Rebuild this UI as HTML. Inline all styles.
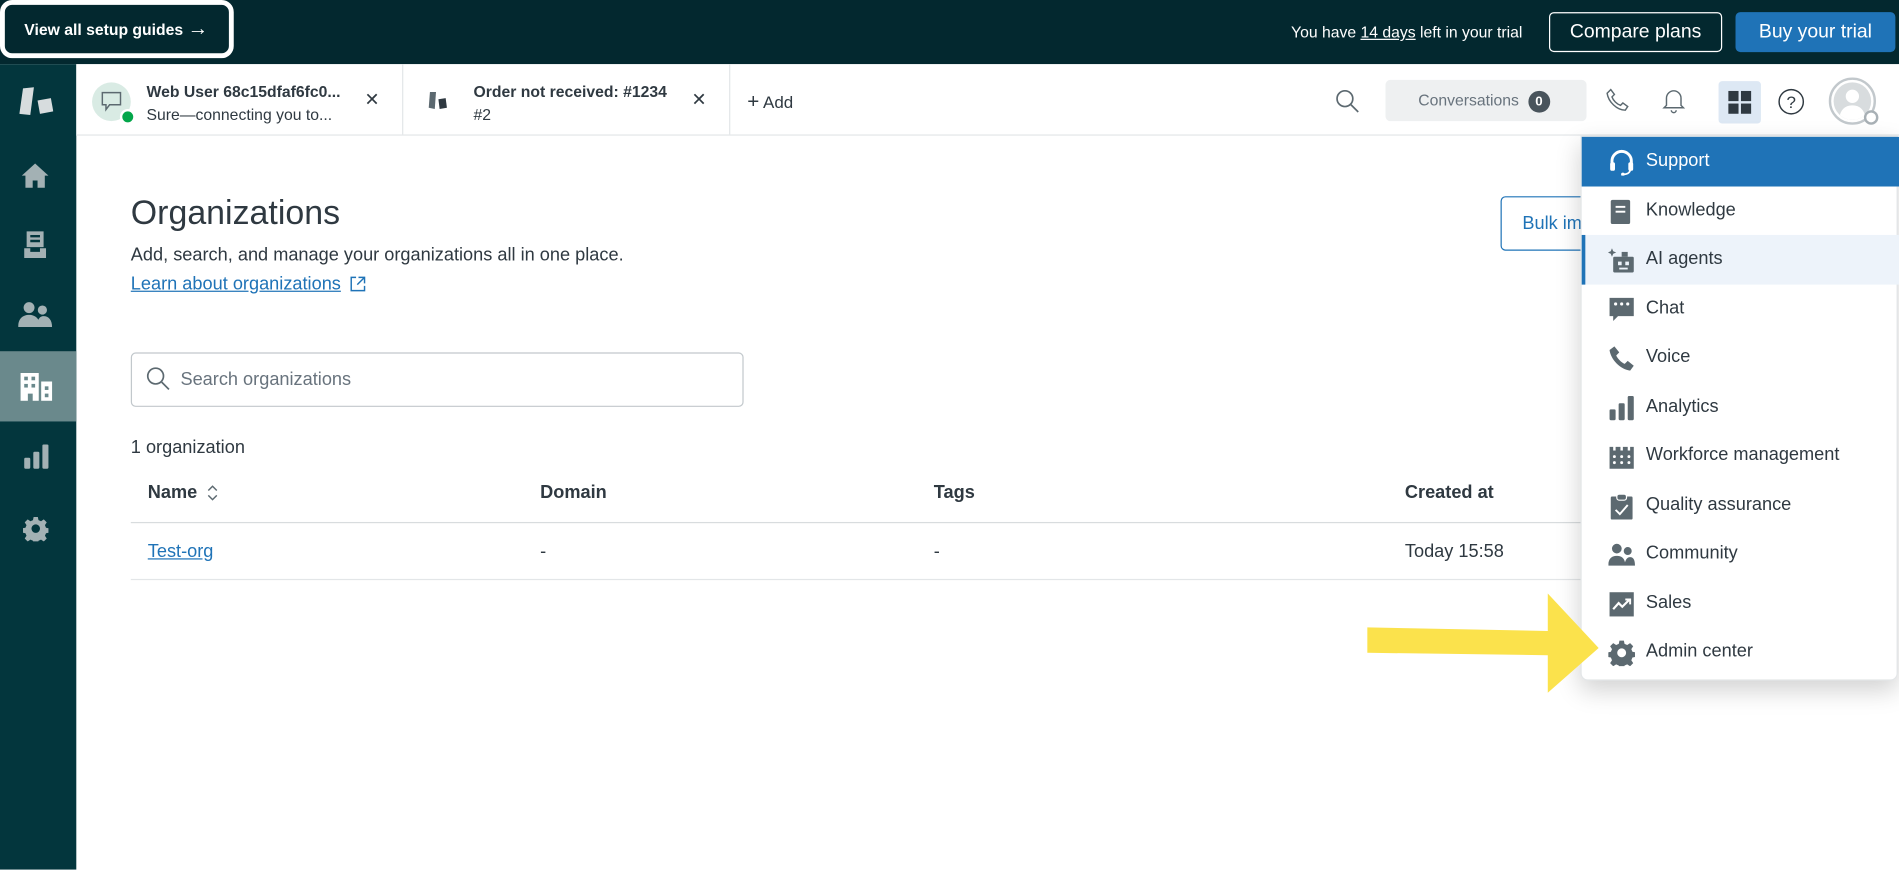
<!DOCTYPE html>
<html><head><meta charset="utf-8"><style>
*{box-sizing:border-box;margin:0;padding:0}
html,body{width:1899px;height:870px;overflow:hidden;background:#fff;font-family:"Liberation Sans",sans-serif;color:#2f3941}
#w{width:1568px;height:718px;transform:scale(1.21110);transform-origin:0 0;position:relative}
.a{position:absolute;white-space:nowrap}
.top{left:0;top:0;width:1568px;height:53px;background:#03282f}
.guide{left:0;top:0;width:193px;height:48px;border:4px solid #fff;border-radius:10px;background:#03282f;color:#fff;font-weight:bold;font-size:13px;line-height:40px;padding-left:16px}
.trial{left:1066px;top:19px;color:#fff;font-size:13px}
.btn1{left:1279px;top:10px;width:143px;height:33px;border:1px solid #fff;border-radius:4px;color:#fff;font-size:16px;text-align:center;line-height:31px}
.btn2{left:1433px;top:10px;width:132px;height:33px;background:#1f73b7;border-radius:4px;color:#fff;font-size:16px;text-align:center;line-height:33px}
.side{left:0;top:53px;width:63px;height:665px;background:#03363d}
.tabs{left:63px;top:53px;width:1505px;height:59px;border-bottom:1px solid #e3e6e8;background:#fff}
.tab{top:0;height:58px;border-right:1px solid #e3e6e8}
.t1{font-size:13px;font-weight:bold;color:#2f3941}
.t2{font-size:13px;color:#2f3941}
.x{font-size:15px;color:#2f3941}
.ic{fill:#5c6970}
.menu{left:1305px;top:112px;width:262px;height:450px;background:#fff;border-radius:0 0 6px 6px;box-shadow:0 8px 20px rgba(0,0,0,.18);border:1px solid #e3e6e8}
.it{position:absolute;left:0;width:262px;height:40.5px;font-size:15px;line-height:40px;padding-left:53px;color:#2f3941}
.it svg{position:absolute;left:22px;top:10px}
</style></head><body><div id="w">
<div class="a top"></div>
<div class="a guide">View all setup guides <span style="font-weight:normal;font-size:17px">→</span></div>
<div class="a trial">You have <u>14 days</u> left in your trial</div>
<div class="a btn1">Compare plans</div>
<div class="a btn2">Buy your trial</div>

<div class="a side">
<svg class="a" style="left:16px;top:18px" width="28" height="26" viewBox="0 0 28 26"><path d="M3 2l9 -1 -3 23 -9 -1z" fill="#d7dcde"/><path d="M15 12l11 -2 2 11 -11 2z" fill="#d7dcde"/></svg>
<svg class="a" style="left:17px;top:81px" width="24" height="22" viewBox="0 0 24 22"><path d="M12 1L1 11h3v10h6v-6h4v6h6V11h3z" fill="#a3b1b4"/></svg>
<svg class="a" style="left:19px;top:137px" width="20" height="24" viewBox="0 0 20 24"><path d="M3 1h14v13H3z M6 4v2h8V4z M6 8v2h8V8z" fill="#a3b1b4" fill-rule="evenodd"/><path d="M1 15h5v3h8v-3h5v8H1z" fill="#a3b1b4"/></svg>
<svg class="a" style="left:15px;top:196px" width="28" height="22" viewBox="0 0 28 22"><circle cx="9" cy="5" r="4.5" fill="#a3b1b4"/><circle cx="20" cy="7" r="3.8" fill="#a3b1b4"/><path d="M0 21c0-7 4-10 9-10s9 3 9 10z M15 21c1-5 2-9 6-9s7 3 7 9z" fill="#a3b1b4"/></svg>
<div class="a" style="left:0;top:237px;width:63px;height:58px;background:#6a898c"></div>
<svg class="a" style="left:16px;top:254px" width="28" height="24" viewBox="0 0 28 24"><path d="M1 1h15v23h-5v-6H7v6H1z" fill="#fff"/><path d="M18 8h9v16h-9z" fill="#fff"/><g fill="#6a898c"><rect x="4" y="4" width="3" height="3"/><rect x="10" y="4" width="3" height="3"/><rect x="4" y="10" width="3" height="3"/><rect x="10" y="10" width="3" height="3"/><rect x="21" y="12" width="3" height="3"/><rect x="21" y="18" width="3" height="3"/></g></svg>
<svg class="a" style="left:19px;top:313px" width="22" height="22" viewBox="0 0 22 22"><rect x="1" y="12" width="5" height="9" rx="1" fill="#a3b1b4"/><rect x="8.5" y="7" width="5" height="14" rx="1" fill="#a3b1b4"/><rect x="16" y="1" width="5" height="20" rx="1" fill="#a3b1b4"/></svg>
<svg class="a" style="left:19px;top:373px" width="21" height="21" viewBox="0 0 24 24"><path d="M10 1h4l.6 3 2.4 1 2.6-1.7 2.8 2.8-1.7 2.6 1 2.4 3 .6v4l-3 .6-1 2.4 1.7 2.6-2.8 2.8-2.6-1.7-2.4 1-.6 3h-4l-.6-3-2.4-1-2.6 1.7-2.8-2.8 1.7-2.6-1-2.4-3-.6v-4l3-.6 1-2.4-1.7-2.6 2.8-2.8 2.6 1.7 2.4-1z M12 8a4 4 0 1 0 .01 0z" fill="#a3b1b4" fill-rule="evenodd"/></svg>
</div>

<div class="a tabs">
 <div class="a tab" style="left:0;width:270px">
  <div class="a" style="left:13px;top:15px;width:32px;height:32px;border-radius:50%;background:#d9ebe4"></div>
  <svg class="a" style="left:20px;top:22px" width="18" height="18" viewBox="0 0 18 18"><path d="M1.5 1.5h15v10h-9l-3 4v-4h-3z" fill="none" stroke="#5c6970" stroke-width="1.2"/></svg>
  <div class="a" style="left:36px;top:37px;width:13px;height:13px;border-radius:50%;background:#03a64a;border:2px solid #fff"></div>
  <div class="a t1" style="left:58px;top:15px">Web User 68c15dfaf6fc0...</div>
  <div class="a t2" style="left:58px;top:34px">Sure—connecting you to...</div>
  <div class="a x" style="left:238px;top:20px">✕</div>
 </div>
 <div class="a tab" style="left:270px;width:270px">
  <svg class="a" style="left:20px;top:22px" width="20" height="16" viewBox="0 0 20 16"><path d="M2 1l5 0-1 14-5 -1z" fill="#5c6970"/><path d="M9 7l6 -1 1 8-6 1z" fill="#2f3941"/></svg>
  <div class="a t1" style="left:58px;top:15px">Order not received: #1234</div>
  <div class="a t2" style="left:58px;top:34px">#2</div>
  <div class="a x" style="left:238px;top:20px">✕</div>
 </div>
 <div class="a" style="left:554px;top:21px;font-size:14px;color:#2f3941"><span style="font-size:17px">+</span> Add</div>
 <svg class="a" style="left:1040px;top:21px" width="19" height="19" viewBox="0 0 19 19"><circle cx="7.5" cy="7.5" r="6.5" fill="none" stroke="#5c6970" stroke-width="1.4"/><path d="M12.5 12.5l6 6" stroke="#5c6970" stroke-width="1.4"/></svg>
 <div class="a" style="left:1081px;top:13px;width:166px;height:34px;background:#eef0f1;border-radius:4px;font-size:13px;color:#68737d;line-height:34px;padding-left:27px">Conversations <span style="display:inline-block;width:18px;height:18px;border-radius:9px;background:#49545c;color:#fff;text-align:center;line-height:18px;font-size:11px;font-weight:bold;margin-left:4px">0</span></div>
 <svg class="a" style="left:1263px;top:20px" width="20" height="20" viewBox="0 0 20 20"><path d="M4 1l3 4-2 2c1 3 4 6 7 7l2-2 4 3-2 3C9 18 2 11 1 4z" fill="none" stroke="#5c6970" stroke-width="1.2"/></svg>
 <svg class="a" style="left:1309px;top:19px" width="20" height="22" viewBox="0 0 20 22"><path d="M4 15V9a6 6 0 0 1 12 0v6l2 2H2z M8 19a2 2 0 0 0 4 0" fill="none" stroke="#5c6970" stroke-width="1.2"/></svg>
 <div class="a" style="left:1356px;top:14px;width:35px;height:35px;background:#dde8f4;border-radius:3px"></div>
 <svg class="a" style="left:1364px;top:22px" width="19" height="19" viewBox="0 0 19 19"><g fill="#2f3941"><rect width="8.5" height="8.5"/><rect x="10.5" width="8.5" height="8.5"/><rect y="10.5" width="8.5" height="8.5"/><rect x="10.5" y="10.5" width="8.5" height="8.5"/></g></svg>
 <svg class="a" style="left:1405px;top:20px" width="22" height="22" viewBox="0 0 22 22"><circle cx="11" cy="11" r="10" fill="none" stroke="#2f3941" stroke-width="1.2"/><text x="11" y="16" text-anchor="middle" font-size="14" font-family="Liberation Sans" fill="#2f3941">?</text></svg>
 <div class="a" style="left:1447px;top:11px;width:39px;height:39px;border-radius:50%;border:2px solid #c2c8cc;background:#fff"></div>
 <div class="a" style="left:1451px;top:15px;width:31px;height:31px;border-radius:50%;background:#d8dcde;overflow:hidden"><div style="position:absolute;left:10px;top:6px;width:11px;height:11px;border-radius:50%;background:#fff"></div><div style="position:absolute;left:5px;top:19px;width:21px;height:14px;border-radius:10px 10px 0 0;background:#fff"></div></div>
 <div class="a" style="left:1476px;top:38px;width:12px;height:12px;border-radius:50%;border:2px solid #a8b0b5;background:#fff"></div>
</div>

<div class="a" style="left:108px;top:160px;font-size:28px;color:#2f3941">Organizations</div>
<div class="a" style="left:108px;top:202px;font-size:15px">Add, search, and manage your organizations all in one place.</div>
<div class="a" style="left:108px;top:226px;font-size:15px;color:#1f73b7;text-decoration:underline">Learn about organizations</div>
<svg class="a" style="left:289px;top:228px" width="13" height="13" viewBox="0 0 13 13"><path d="M5 1H1v11h11V8 M7 1h5v5 M12 1L6 7" fill="none" stroke="#1f73b7" stroke-width="1.2"/></svg>
<div class="a" style="left:1239px;top:162px;width:100px;height:45px;border:1px solid #1f73b7;border-radius:4px;font-size:15px;color:#1f73b7;line-height:43px;padding-left:17px">Bulk import</div>
<div class="a" style="left:108px;top:291px;width:506px;height:45px;border:1px solid #c2c8cc;border-radius:4px"></div>
<svg class="a" style="left:121px;top:303px" width="19" height="19" viewBox="0 0 19 19"><circle cx="7.5" cy="7.5" r="6.5" fill="none" stroke="#5c6970" stroke-width="1.4"/><path d="M12.5 12.5l6 6" stroke="#5c6970" stroke-width="1.4"/></svg>
<div class="a" style="left:149px;top:305px;font-size:15px;color:#68737d">Search organizations</div>
<div class="a" style="left:108px;top:361px;font-size:15px">1 organization</div>
<div class="a" style="left:122px;top:398px;font-size:15px;font-weight:bold">Name</div>
<svg class="a" style="left:170px;top:400px" width="11" height="14" viewBox="0 0 11 14"><path d="M2 5l3.5-3.5L9 5 M2 9l3.5 3.5L9 9" fill="none" stroke="#5c6970" stroke-width="1.2"/></svg>
<div class="a" style="left:446px;top:398px;font-size:15px;font-weight:bold">Domain</div>
<div class="a" style="left:771px;top:398px;font-size:15px;font-weight:bold">Tags</div>
<div class="a" style="left:1160px;top:398px;font-size:15px;font-weight:bold">Created at</div>
<div class="a" style="left:108px;top:431px;width:1200px;height:1px;background:#d8dcde"></div>
<div class="a" style="left:122px;top:447px;font-size:15px;color:#1f73b7;text-decoration:underline">Test-org</div>
<div class="a" style="left:446px;top:447px;font-size:15px">-</div>
<div class="a" style="left:771px;top:447px;font-size:15px">-</div>
<div class="a" style="left:1160px;top:447px;font-size:15px">Today 15:58</div>
<div class="a" style="left:108px;top:478px;width:1200px;height:1px;background:#e3e6e8"></div>

<div class="a menu">
 <div class="it" style="top:0;background:#1f73b7;color:#fff"><svg width="22" height="22" viewBox="0 0 22 22"><path d="M3 12V10a8 8 0 0 1 16 0v2" fill="none" stroke="#fff" stroke-width="2.4"/><rect x="1.5" y="11" width="4" height="7" rx="1.5" fill="#fff"/><rect x="16.5" y="11" width="4" height="7" rx="1.5" fill="#fff"/><path d="M18 17c0 3-3 4-6 4" fill="none" stroke="#fff" stroke-width="1.5"/><circle cx="12" cy="21" r="1.5" fill="#fff"/></svg>Support</div>
 <div class="it" style="top:40.5px"><svg width="20" height="22" viewBox="0 0 20 22"><rect x="2" y="1" width="16" height="20" rx="1.5" class="ic"/><rect x="6" y="6" width="8" height="1.6" fill="#fff"/><rect x="6" y="10" width="8" height="1.6" fill="#fff"/></svg>Knowledge</div>
 <div class="it" style="top:81px;background:#edf3fa"><div style="position:absolute;left:0;top:0;width:3px;height:40.5px;background:#1f73b7"></div><svg width="22" height="22" viewBox="0 0 22 22"><path d="M3 1l1 2.5 2.5 1-2.5 1-1 2.5-1-2.5-2.5-1 2.5-1z" class="ic"/><rect x="4" y="8" width="17" height="13" rx="1" class="ic"/><rect x="11" y="4" width="5" height="4" class="ic"/><rect x="8" y="12" width="3" height="3" fill="#edf3fa"/><rect x="14" y="12" width="3" height="3" fill="#edf3fa"/><rect x="9" y="17" width="7" height="1.5" fill="#edf3fa"/></svg>AI agents</div>
 <div class="it" style="top:121.5px"><svg width="22" height="22" viewBox="0 0 22 22"><path d="M1 1h20v15H8l-4 4v-4H1z" class="ic"/><circle cx="6" cy="6" r="1.3" fill="#fff"/><circle cx="11" cy="6" r="1.3" fill="#fff"/><circle cx="16" cy="6" r="1.3" fill="#fff"/></svg>Chat</div>
 <div class="it" style="top:162px"><svg width="22" height="22" viewBox="0 0 22 22"><path d="M5 1l4 5-2.5 2.5c1.5 3 4 5.5 7 7L16 13l5 4-3 4C10 20 2 12 1 4z" class="ic"/></svg>Voice</div>
 <div class="it" style="top:202.5px"><svg width="22" height="22" viewBox="0 0 22 22"><rect x="1" y="12" width="5" height="9" rx="1" class="ic"/><rect x="8.5" y="7" width="5" height="14" rx="1" class="ic"/><rect x="16" y="1" width="5" height="20" rx="1" class="ic"/></svg>Analytics</div>
 <div class="it" style="top:243px"><svg width="22" height="22" viewBox="0 0 22 22"><path d="M1 3h20v18H1z" class="ic"/><g fill="#fff"><rect x="4" y="1" width="2" height="5"/><rect x="10" y="1" width="2" height="5"/><rect x="16" y="1" width="2" height="5"/><circle cx="5" cy="11" r="1.2"/><circle cx="11" cy="11" r="1.2"/><circle cx="17" cy="11" r="1.2"/><circle cx="5" cy="16" r="1.2"/><circle cx="11" cy="16" r="1.2"/><circle cx="17" cy="16" r="1.2"/></g></svg>Workforce management</div>
 <div class="it" style="top:283.5px"><svg width="22" height="22" viewBox="0 0 22 22"><rect x="2" y="3" width="18" height="19" rx="1" class="ic"/><rect x="7" y="1" width="8" height="5" rx="2" class="ic" stroke="#fff" stroke-width="1"/><path d="M6 14l3.5 3.5L16 10" fill="none" stroke="#fff" stroke-width="1.6"/></svg>Quality assurance</div>
 <div class="it" style="top:324px"><svg width="22" height="22" viewBox="0 0 22 22"><circle cx="7" cy="6" r="4" class="ic"/><circle cx="16" cy="8" r="3.3" class="ic"/><path d="M0 20c0-6 3-8 7-8s7 2 7 8z M13 20c1-4 2-7 5-7s4 3 4 7z" class="ic"/></svg>Community</div>
 <div class="it" style="top:364.5px"><svg width="22" height="22" viewBox="0 0 22 22"><rect x="1" y="1" width="20" height="20" class="ic"/><path d="M4 15l4.5-5 3 3L17 7.5" fill="none" stroke="#fff" stroke-width="1.8"/><path d="M14 7h4v4" fill="none" stroke="#fff" stroke-width="1.6"/></svg>Sales</div>
 <div class="it" style="top:405px"><svg width="22" height="22" viewBox="0 0 24 24"><path d="M10 1h4l.6 3 2.4 1 2.6-1.7 2.8 2.8-1.7 2.6 1 2.4 3 .6v4l-3 .6-1 2.4 1.7 2.6-2.8 2.8-2.6-1.7-2.4 1-.6 3h-4l-.6-3-2.4-1-2.6 1.7-2.8-2.8 1.7-2.6-1-2.4-3-.6v-4l3-.6 1-2.4-1.7-2.6 2.8-2.8 2.6 1.7 2.4-1z M12 8a4 4 0 1 0 .01 0z" class="ic" fill-rule="evenodd"/></svg>Admin center</div>
</div>

<svg class="a" style="left:1120px;top:485px" width="210" height="90" viewBox="0 0 210 90"><path d="M9 33L158 36V5L200 50 158 87V56L9 54z" fill="#fbe24c"/></svg>
</div></body></html>
